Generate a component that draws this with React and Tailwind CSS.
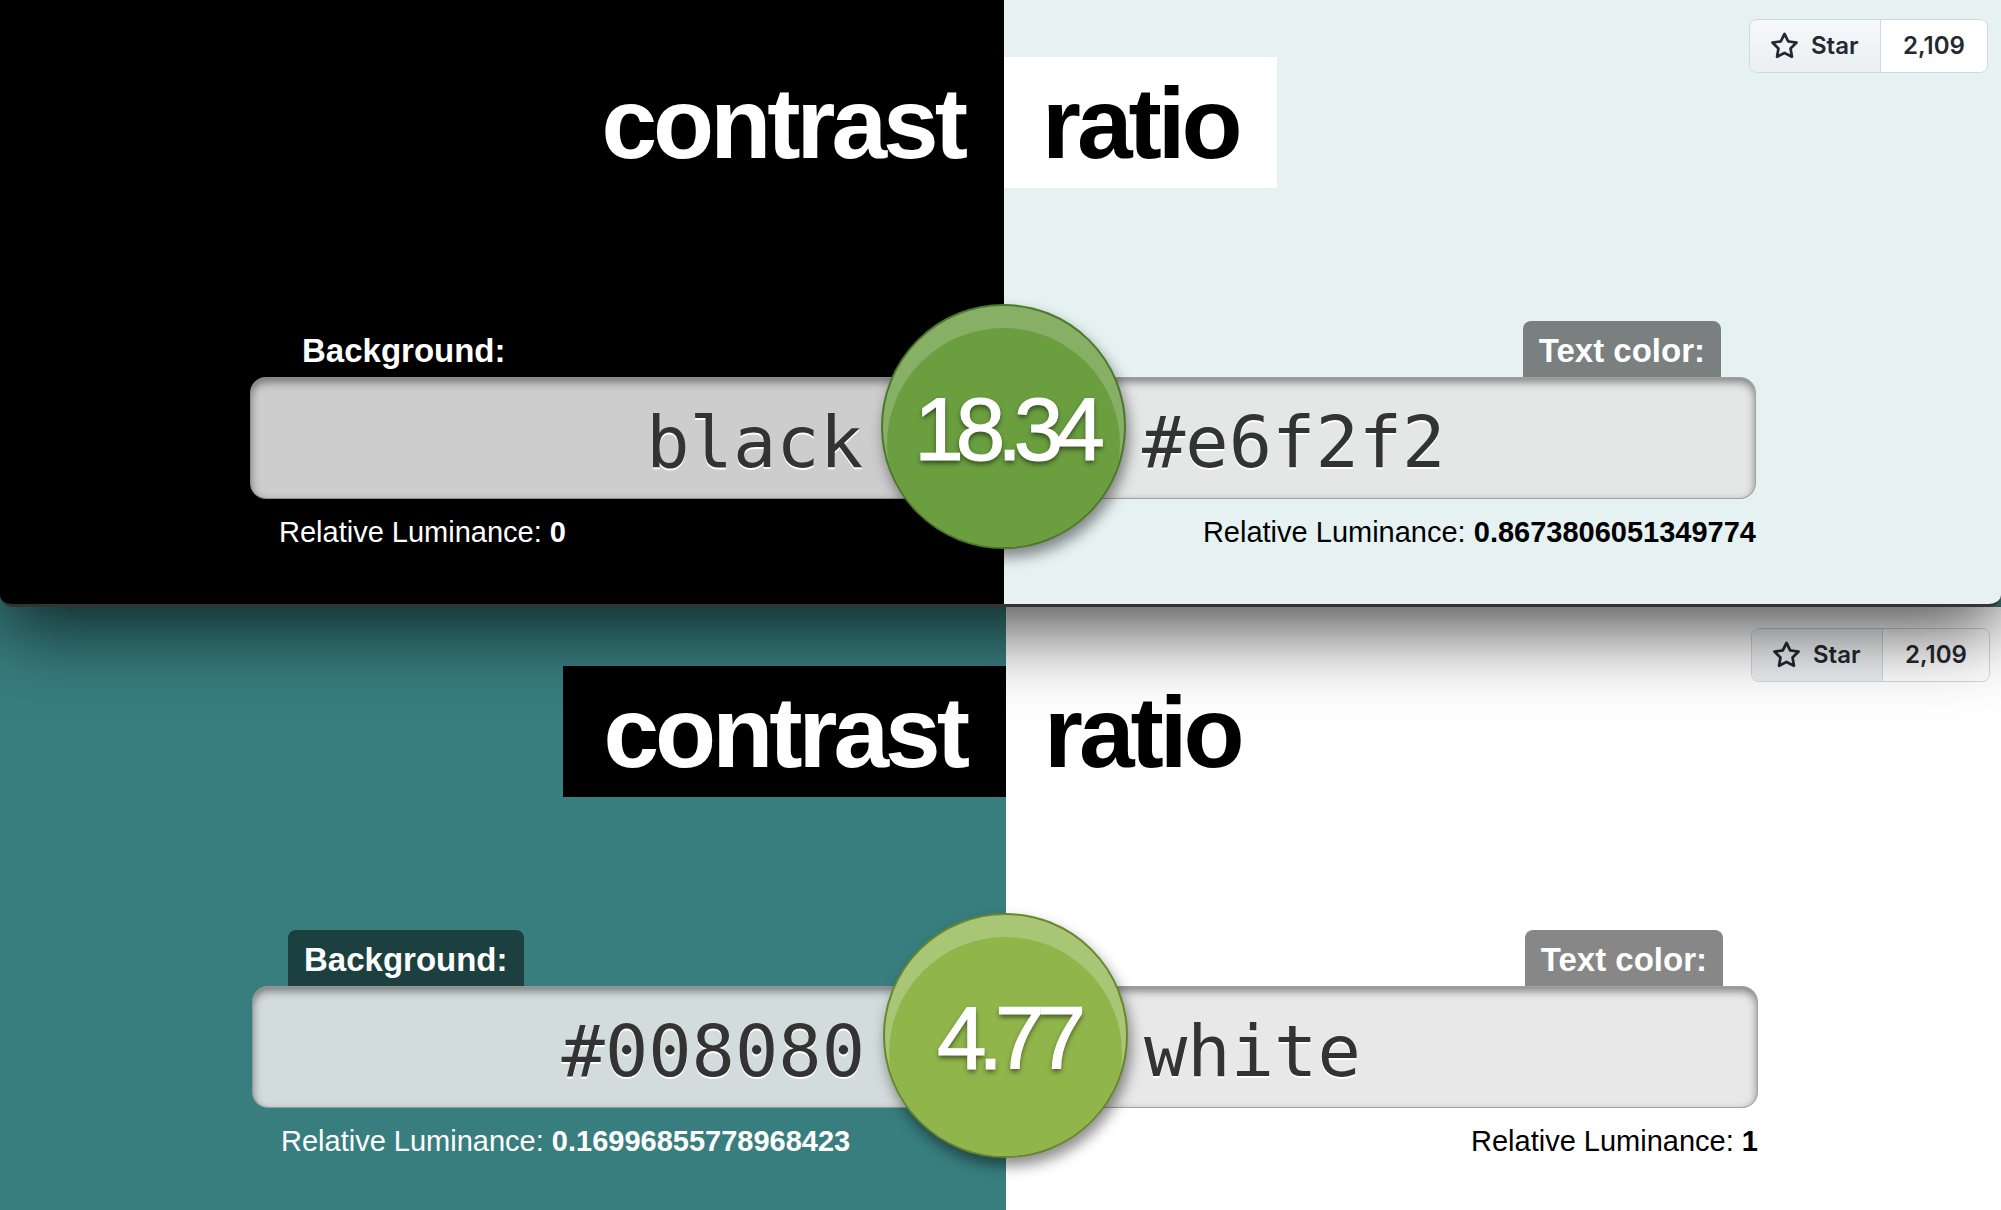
import React from "react";

const panels = [
  {
    id: "top",
    frame:
      "relative z-10 h-[607px] overflow-hidden rounded-b-[12px] border-b-[3px] border-[#333] bg-[linear-gradient(to_right,#000_1004px,#e6f1f2_1004px)] shadow-[0_20px_80px_rgba(0,0,0,0.75)]",
    inner: "relative h-full w-[2001px]",
    bg: "black",
    fg: "#e6f2f2",
    ratio: "18.34",
    bgLum: "0",
    fgLum: "0.8673806051349774",
    leftInput: "bg-[#cdcdcd]",
    rightInput: "bg-[#e5e7e7]",
    leftText: "text-white",
    rightText: "text-black",
    circle: "border-[#4b7829] bg-[#87b066]",
    circleCore: "bg-[#6a9e3f]",
  },
  {
    id: "bottom",
    frame:
      "relative z-0 flex-1 overflow-hidden bg-[linear-gradient(to_right,#387e7f_1006px,#fff_1006px)]",
    inner: "relative ml-[2px] mt-[2px] h-full w-[2001px]",
    bg: "#008080",
    fg: "white",
    ratio: "4.77",
    bgLum: "0.16996855778968423",
    fgLum: "1",
    leftInput: "bg-[#d3dcdc]",
    rightInput: "bg-[#e8e8e8]",
    leftText: "text-white",
    rightText: "text-black",
    circle: "border-[#68872c] bg-[#a9c676]",
    circleCore: "bg-[#90b54a]",
  },
];

function StarIcon() {
  return (
    <svg viewBox="0 0 16 16" width="29" height="29" fill="currentColor">
      <path d="M8 .25a.75.75 0 0 1 .673.418l1.882 3.815 4.21.612a.75.75 0 0 1 .416 1.279l-3.046 2.97.719 4.192a.751.751 0 0 1-1.088.791L8 12.347l-3.766 1.98a.75.75 0 0 1-1.088-.79l.72-4.194L.818 6.374a.75.75 0 0 1 .416-1.28l4.21-.611L7.327.668A.75.75 0 0 1 8 .25Zm0 2.445L6.615 5.5a.75.75 0 0 1-.564.41l-3.097.45 2.24 2.184a.75.75 0 0 1 .216.664l-.528 3.084 2.769-1.456a.75.75 0 0 1 .698 0l2.77 1.456-.53-3.084a.75.75 0 0 1 .216-.664l2.24-2.183-3.096-.45a.75.75 0 0 1-.564-.41L8 2.694Z" />
    </svg>
  );
}

function StarButton() {
  return (
    <div className="absolute right-[13px] top-[19px] flex h-[54px] rounded-[8px] border border-[#d3d8dc] font-['Inter',sans-serif] text-[24px] font-semibold text-[#24292f]">
      <div className="flex w-[131px] items-center gap-[12px] rounded-l-[7px] border-r border-[#d3d8dc] bg-[linear-gradient(#f6f8fa,#ebeff2)] pl-[20px]">
        <StarIcon />
        <span>Star</span>
      </div>
      <div className="flex w-[106px] items-center justify-center rounded-r-[7px] bg-white">
        2,109
      </div>
    </div>
  );
}

function Panel({ p }) {
  return (
    <section className={p.frame}>
      <div className={p.inner}>
        <StarButton />

        {/* title, split on the colour seam */}
        <h1 className="grid grid-cols-[1004px_1fr] pt-[57px] font-['Liberation_Sans',Arial,sans-serif] text-[100px] font-bold leading-[100px] tracking-[-4px]">
          <div className="flex justify-end">
            <span className="bg-black px-[40px] pb-[15px] pt-[16px] text-white">contrast</span>
          </div>
          <div className="flex justify-start">
            <span className="bg-white pl-[38px] pr-[38px] pb-[15px] pt-[16px] text-black">ratio</span>
          </div>
        </h1>

        <div className="mt-[133px] grid grid-cols-[1004px_1fr] font-['Liberation_Sans',Arial,sans-serif]">
          {/* background side */}
          <div className="flex flex-col items-start pl-[250px]">
            <label className="ml-[36px] h-[56px] rounded-t-[8px] bg-black/50 px-[16px] pt-[10px] text-[33px] font-bold leading-[40px] text-white">
              Background:
            </label>
            <div
              className={`h-[122px] w-full rounded-[16px] border border-black/30 ${p.leftInput} pr-[140px] pt-[28px] text-right font-['DejaVu_Sans_Mono',monospace] text-[72px] leading-none text-[#333] shadow-[inset_0_4px_8px_rgba(0,0,0,0.45)] [text-shadow:0_2px_0_#fff]`}
            >
              {p.bg === "black" ? "black" : "#008080"}
            </div>
            <p className={`ml-[29px] mt-[17px] text-[29px] leading-[1.15] ${p.leftText}`}>
              Relative Luminance: <b>{p.bgLum}</b>
            </p>
          </div>

          {/* text colour side */}
          <div className="flex flex-col items-end pr-[245px]">
            <label className="mr-[35px] h-[56px] rounded-t-[8px] bg-black/[0.47] px-[16px] pt-[10px] text-[33px] font-bold leading-[40px] text-white">
              Text color:
            </label>
            <div
              className={`h-[122px] w-full rounded-[16px] border border-black/30 ${p.rightInput} pl-[137px] pt-[28px] text-left font-['DejaVu_Sans_Mono',monospace] text-[72px] leading-none text-[#333] shadow-[inset_0_4px_8px_rgba(0,0,0,0.45)] [text-shadow:0_2px_0_#fff]`}
            >
              {p.fg === "white" ? "white" : "#e6f2f2"}
            </div>
            <p className={`mt-[17px] text-[29px] leading-[1.15] ${p.rightText}`}>
              Relative Luminance: <b>{p.fgLum}</b>
            </p>
          </div>
        </div>

        {/* contrast ratio badge sitting over both inputs */}
        <div
          className={`absolute left-[881px] top-[304px] z-20 size-[245px] overflow-hidden rounded-full border-2 ${p.circle} shadow-[3px_8px_14px_rgba(0,0,0,0.45)]`}
        >
          <div className={`absolute left-[4px] top-[22px] size-[233px] rounded-full ${p.circleCore}`} />
          <div className="relative flex h-full items-center justify-center pl-[4px] pt-[6px] font-['Liberation_Sans',Arial,sans-serif] text-[89px] leading-none tracking-[-8px] text-white [-webkit-text-stroke:1.2px_white] [text-shadow:0_3px_5px_rgba(0,0,0,0.55)]">
            {p.ratio}
          </div>
        </div>
      </div>
    </section>
  );
}

export default function App() {
  return (
    <div className="flex h-[1210px] w-full flex-col overflow-hidden bg-[#387e7f]">
      {panels.map((p) => (
        <Panel key={p.id} p={p} />
      ))}
    </div>
  );
}
